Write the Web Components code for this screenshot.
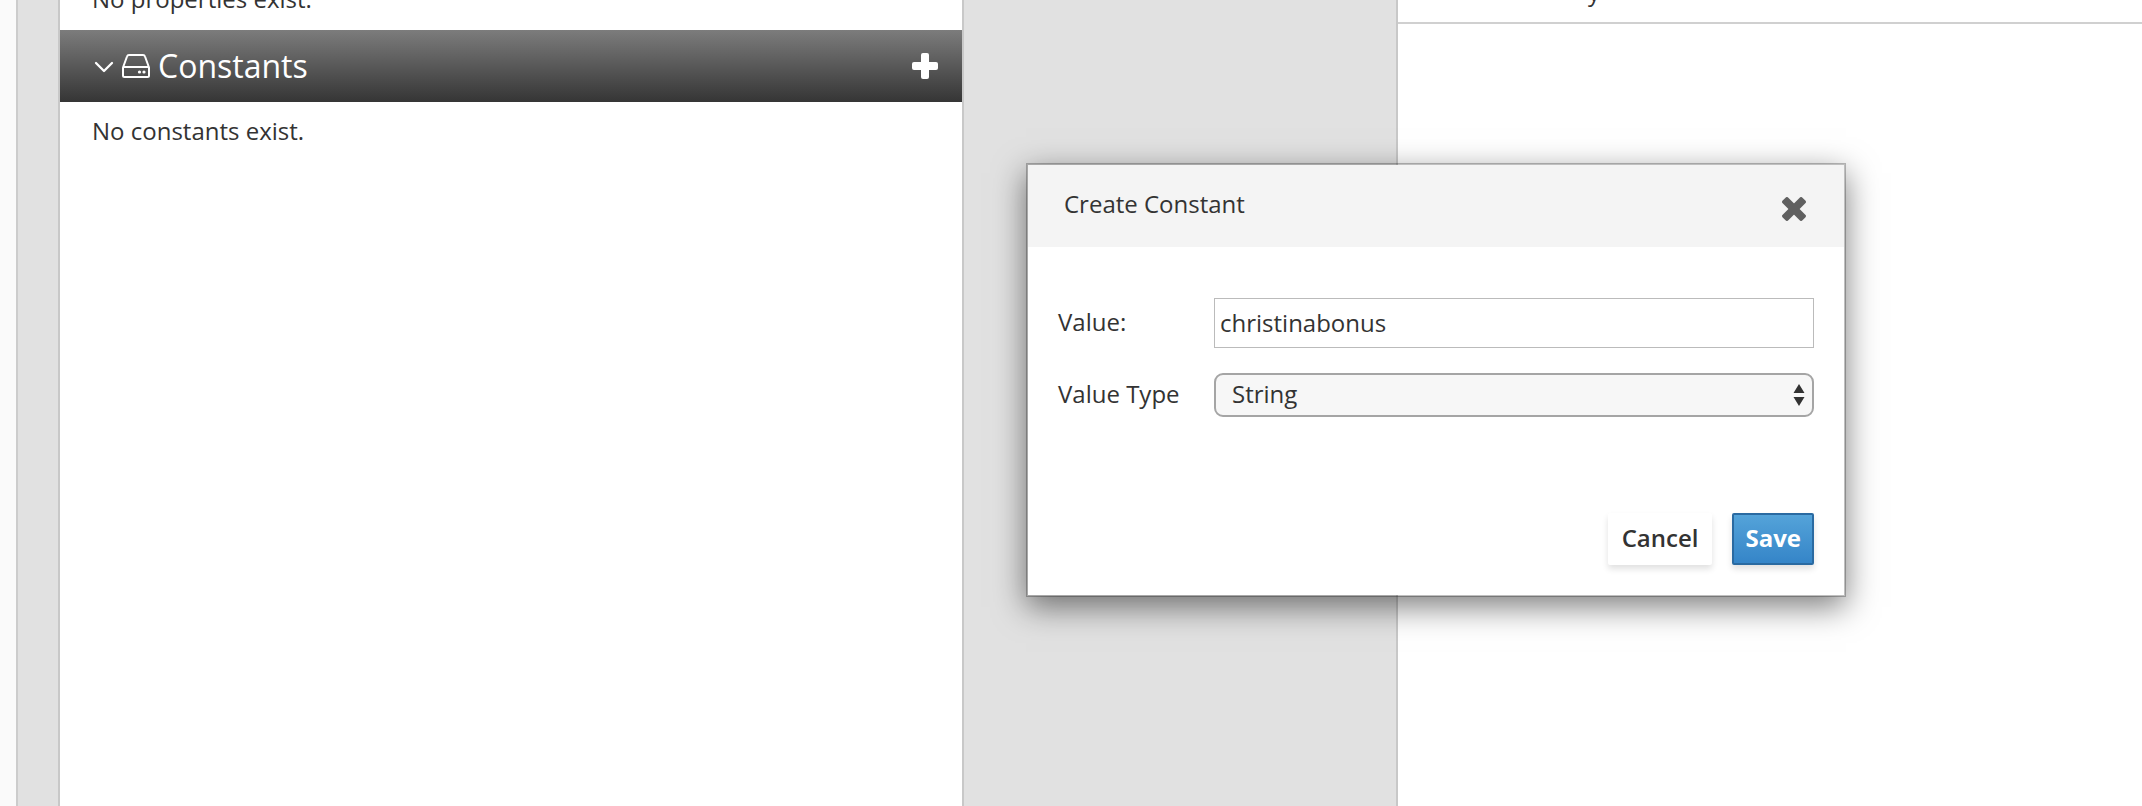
<!DOCTYPE html>
<html lang="en">
<head>
<meta charset="utf-8">
<title>Create Constant</title>
<style>
  html, body { height: 100%; margin: 0; }
  body {
    overflow: hidden;
    font: 24px/40px "Open Sans", "Noto Sans", sans-serif;
    color: #333;
    background: #fff;
  }
</style>
</head>
<body>
<app-workspace>
  <side-section slot="panel" class="scrolled">No properties exist.</side-section>
  <section-bar slot="panel" label="Constants"></section-bar>
  <side-section slot="panel">No constants exist.</side-section>
  <main-heading slot="main">y</main-heading>
  <constant-dialog slot="dialog"></constant-dialog>
</app-workspace>

<script>
const define = (name, html, setup) => {
  const template = document.createElement('template');
  template.innerHTML = html;
  customElements.define(name, class extends HTMLElement {
    constructor() {
      super();
      this.attachShadow({ mode: 'open' }).append(template.content.cloneNode(true));
    }
    connectedCallback() { if (setup) setup(this, this.shadowRoot); }
  });
};

define('app-workspace', `
  <style>
    :host {
      display: grid;
      grid-template-columns: 18px 40px 453fr 432px 373fr;
      position: relative;
      height: 100%;
      background: #e1e1e1;
    }
    .edge { background: #fafafa; border-right: 2px solid #ccc; }
    .panel {
      grid-column: 3;
      background: #fff;
      border: solid #c8c8c8;
      border-width: 0 2px;
      overflow: hidden;
    }
    .main { grid-column: 5; background: #fff; border-left: 2px solid #c8c8c8; overflow: hidden; }
    ::slotted(constant-dialog) { position: absolute; top: 163px; left: 1026px; }
    ::slotted(.scrolled) { margin-top: -30px; }
  </style>
  <div class="edge"></div>
  <section class="panel"><slot name="panel"></slot></section>
  <main class="main"><slot name="main"></slot></main>
  <slot name="dialog"></slot>`);

define('side-section', `
  <style>:host { display: block; padding: 9px 32px 11px; }</style>
  <slot></slot>`);

define('main-heading', `
  <style>
    :host {
      display: flex;
      align-items: flex-end;
      height: 22px;
      padding: 0 190px;
      overflow: hidden;
      border-bottom: 2px solid #d0d0d0;
      line-height: 60px;
    }
  </style>
  <slot></slot>`);

define('section-bar', `
  <style>
    :host {
      display: flex;
      align-items: center;
      height: 72px;
      padding: 0 24px 0 34px;
      background: linear-gradient(#7c7c7c, #353535);
      color: #fff;
      font-size: 32px;
    }
    svg { display: block; }
    .chevron { margin-right: 8px; }
    .drive { margin-right: 8px; }
    h2 { flex: 1; margin: 0; font: inherit; font-weight: 500; }
    button { padding: 0; border: 0; background: none; color: inherit; }
  </style>
  <svg class="chevron" width="20" height="20" viewBox="0 0 20 20" fill="none" stroke="#fff" stroke-width="2.300" stroke-linecap="round" stroke-linejoin="round"><path d="M2 7l8 8 8-8"/></svg>
  <svg class="drive" width="28" height="24" viewBox="0 0 28 24" fill="none" stroke="#fff" stroke-width="2" stroke-linejoin="round"><path d="M1 13.500 5 2.500Q5.500 1 7 1H21Q22.500 1 23 2.500L27 13.500V21.500Q27 23 25.500 23H2.500Q1 23 1 21.500ZM1 13H27"/><g fill="#fff" stroke="none"><circle cx="17.500" cy="18" r="1.600"/><circle cx="22" cy="18" r="1.600"/></g></svg>
  <h2></h2>
  <button type="button" aria-label="Add constant">
    <svg width="26" height="26" viewBox="0 0 26 26" fill="#fff"><rect x="9" width="8" height="26" rx="2"/><rect y="9" width="26" height="8" rx="2"/></svg>
  </button>`,
  (host, root) => { root.querySelector('h2').textContent = host.getAttribute('label'); });

define('action-button', `
  <style>
    :host { display: block; }
    button {
      display: block;
      height: 52px;
      padding: 0 12px 2px;
      border: 2px solid #fff;
      border-radius: 2px;
      background: #fff;
      box-shadow: 0 4px 6px rgba(0, 0, 0, .12);
      color: #333;
      font: 600 24px/46px "Open Sans", "Noto Sans", sans-serif;
    }
    :host([primary]) button {
      padding: 0 11px 2px;
      border-color: #2a6aa1;
      background: linear-gradient(#54a3d9, #3585c8);
      color: #fff;
      font-weight: 700;
    }
  </style>
  <button type="button"><slot></slot></button>`);

define('constant-dialog', `
  <style>
    :host {
      display: block;
      box-sizing: border-box;
      width: 820px;
      border: 2px solid rgba(0, 0, 0, .25);
      background: #fff;
      background-clip: padding-box;
      box-shadow: 0 10px 30px rgba(0, 0, 0, .5);
    }
    header {
      display: flex;
      justify-content: space-between;
      height: 82px;
      box-sizing: border-box;
      padding: 19px 38px 0 36px;
      background: #f4f4f4;
    }
    h1 { margin: 0; font: inherit; }
    .close { height: 24px; margin-top: 13px; padding: 0; border: 0; background: none; }
    svg { display: block; }
    form {
      display: grid;
      grid-template-columns: 156px 1fr;
      row-gap: 25px;
      align-items: center;
      padding: 51px 30px 0;
    }
    label { padding-bottom: 2px; }
    input, select {
      box-sizing: border-box;
      width: 100%;
      margin: 0;
      color: #333;
      font: 24px/32px "Open Sans", "Noto Sans", sans-serif;
    }
    input { height: 50px; padding: 0 5px 2px; border: 1px solid #bbb; background: #fff; }
    .choice { position: relative; }
    select {
      display: block;
      appearance: none;
      height: 44px;
      padding: 0 16px 2px;
      border: 2px solid #a5a5a5;
      border-radius: 9px;
      background: #f7f7f7;
    }
    .choice svg { position: absolute; right: 9px; top: 11px; pointer-events: none; }
    footer { display: flex; justify-content: flex-end; gap: 20px; padding: 96px 30px 30px; }
  </style>
  <header>
    <h1>Create Constant</h1>
    <button class="close" type="button" aria-label="Close">
      <svg width="24" height="24" viewBox="0 0 24 24" fill="#606060"><g transform="rotate(45 12 12)"><rect x="8" y="-2" width="8" height="28" rx="2"/><rect x="-2" y="8" width="28" height="8" rx="2"/></g></svg>
    </button>
  </header>
  <form>
    <label for="value">Value:</label>
    <input id="value" type="text" value="christinabonus">
    <label for="type">Value Type</label>
    <div class="choice">
      <select id="type"><option>String</option></select>
      <svg width="12" height="22" viewBox="0 0 12 22" fill="#333"><path d="M6 0l5.500 9H.500zM6 22l5.500-9H.500z"/></svg>
    </div>
  </form>
  <footer>
    <action-button>Cancel</action-button>
    <action-button primary>Save</action-button>
  </footer>`);
</script>
</body>
</html>
